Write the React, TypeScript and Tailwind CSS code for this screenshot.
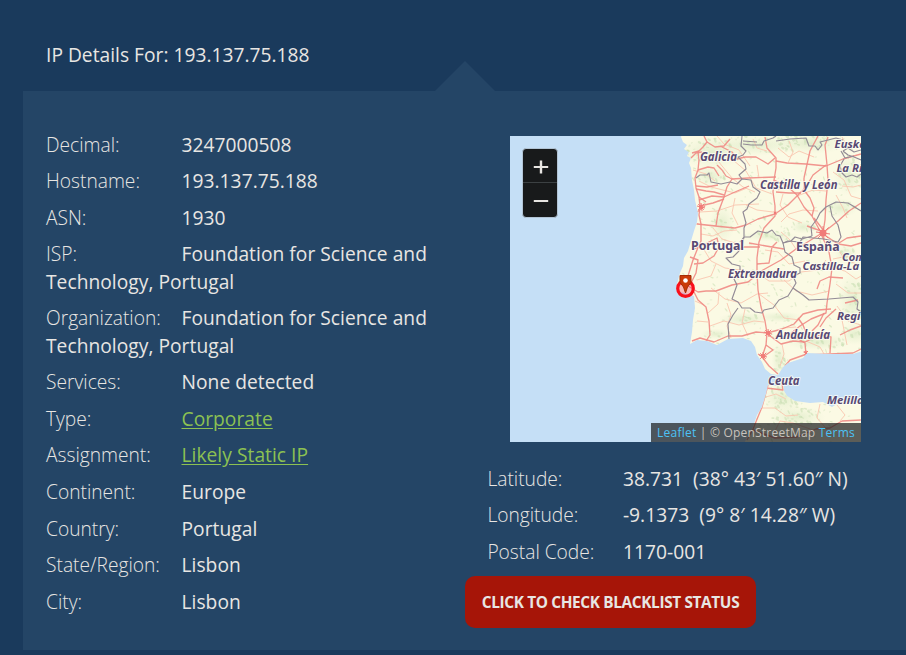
import React from "react";

type Detail = { label: string; value: string; link?: boolean };

const details: Detail[] = [
  { label: "Decimal:", value: "3247000508" },
  { label: "Hostname:", value: "193.137.75.188" },
  { label: "ASN:", value: "1930" },
  { label: "ISP:", value: "Foundation for Science and Technology, Portugal" },
  { label: "Organization:", value: "Foundation for Science and Technology, Portugal" },
  { label: "Services:", value: "None detected" },
  { label: "Type:", value: "Corporate", link: true },
  { label: "Assignment:", value: "Likely Static IP", link: true },
  { label: "Continent:", value: "Europe" },
  { label: "Country:", value: "Portugal" },
  { label: "State/Region:", value: "Lisbon" },
  { label: "City:", value: "Lisbon" },
];

const location: Detail[] = [
  { label: "Latitude:", value: "38.731\u00a0 (38° 43′ 51.60″ N)" },
  { label: "Longitude:", value: "-9.1373\u00a0 (9° 8′ 14.28″ W)" },
  { label: "Postal Code:", value: "1170-001" },
];

function Row({ label, value, link }: Detail) {
  return (
    <li className="mb-[9.3px]">
      <span className="inline-block w-[135.5px] font-light">{label}</span>
      {link ? (
        <a className="tracking-[0.04px] text-[#8cc152] underline underline-offset-2">{value}</a>
      ) : (
        <span className="font-medium tracking-[0.04px]">{value}</span>
      )}
    </li>
  );
}

const iberia =
  "M684 130L681 137 683 142 687 145 684 149 689 152 687 156 691 158 689 163 691 168 692 180 694 190 695 200 698 213 697 222 694 231 691 241 688 251 684 258 683 266 680 273 677 284 678 291 687 294 694 296 695 308 693 320 692 332 690 344 697 340 707 341 717 345 728 339 743 338 751 341 755 347 757 355 762 362 765 369 771 374 778 375 783 367 788 363 803 358 807 353 830 354 853 354 866 350 866 130Z";
const africa =
  "M768 385L776 386 783 382 784 391 787 396 795 401 810 403 823 402 832 407 840 402 866 403 866 446 743 446 747 437 753 427 757 415 762 407 766 394Z";

const roads = [
  "M704 136L707 142 703 147 698 152 699 160 698 170 695 178 696 188 699 197 700 206 699 215 701 224 701 241 697 250 693 260 688 276 686 288",
  "M707 142L715 147 724 146 730 139M720 146L732 152 737 159 745 157 756 157 763 161 768 164 775 158",
  "M692 153L699 151M691 158L696 153 702 152M698 170L708 167 714 168 719 176M717 165L722 170 726 176 732 179 748 178 776 177",
  "M696 189L706 191 714 192 724 195M699 200L712 196 724 197 735 192 749 186M700 206L713 203 724 199",
  "M696 186L707 187 718 185M699 197L706 202M697 212L705 206",
  "M732 179L727 187 724 197 718 213 716 226 697 224 715 226 735 228 746 225 758 219 775 214 788 205 797 196 806 187 813 175 826 165",
  "M765 137L767 148 776 158 776 168 774 180 773 192 775 206 775 216 764 228 759 242 757 258 757 273 758 290 761 307 765 321 767 333 766 345 762 357 769 366 778 374",
  "M776 161L787 163 806 164 826 166 843 159 861 154M776 192L789 193 801 193",
  "M774 180L788 187 797 195 804 207 812 216 820 231",
  "M804 178L804 190 810 198 814 208 812 216M818 136L810 151 804 178",
  "M828 137L825 145 827 165 828 180 826 200 825 220 823 233",
  "M688 286L698 292 706 291 716 291 732 285 748 282 763 270 781 260 796 249 806 243 822 233",
  "M694 249L703 245 717 238 719 247 714 256 703 263 694 264M690 257L698 260 696 273 690 285",
  "M694 292L698 300 706 307 709 321 710 335 706 341M692 341L700 338 714 342 728 336 742 336 756 332 768 333",
  "M767 333L782 329 794 324 803 314 818 310 831 309",
  "M822 236L829 252 832 268 830 284 827 303 826 313 811 319 800 326 790 334 805 343 806 355",
  "M823 234L838 244 851 246 861 243M824 232L838 221 849 211 861 203M824 231L814 218M824 232L807 226",
  "M766 333L781 344 793 341 805 342 820 335 831 337 830 353",
  "M798 318L803 325 807 335M824 313L818 325 812 331M861 326L850 330 840 335",
  "M763 357L758 354M763 357L773 350 766 345M785 366L790 360 804 355 830 354 853 353 861 349",
  "M768 385L762 407 753 429 747 440M766 388L783 390 782 384M753 430L775 438 797 437 816 429 830 428 842 421 861 420",
  "M737 250L744 247 760 247M757 264L769 263 772 247 777 242M749 243L766 246 784 249",
  "M817 289L820 281 829 277 843 278M836 309L826 318 820 327M858 300L845 303M839 243L847 238 861 236",
];

const minorRoads = [
  "M717 136L724 144 739 150 750 166M704 156L718 161 732 178 743 187 755 192M699 181L711 187 735 193 747 188M700 212L717 211 735 205 759 204",
  "M733 160L746 171 756 188 772 194M738 225L732 213 735 198M753 139L757 148 767 151M778 148L789 157 799 151 814 157",
  "M778 190L790 184 797 187M781 222L789 214 803 210 818 211M833 172L844 180 851 196 861 199M836 195L843 208 847 218",
  "M701 234L713 236 724 231 737 230M703 248L711 261 725 268 748 271M697 280L711 276 716 264M719 292L718 304 708 313",
  "M711 288L725 299 741 303 757 294 768 293M757 273L769 281 789 281 801 272 818 270 826 260M765 250L778 252 789 264 805 261",
  "M759 294L774 305 784 318 800 320M784 280L796 291 812 295 829 291M830 268L845 271 856 279 861 276M836 284L848 293 861 293",
  "M838 249L845 260 860 265M710 326L724 321 739 325 754 321 764 322M727 303L731 315 727 326 731 338M745 309L742 323 748 336",
  "M775 337L783 328 796 327M782 344L784 354 780 366M806 341L820 347 824 354M837 306L848 321 861 325",
  "M766 397L776 394 786 399M762 408L775 408 786 416 798 415M773 435L780 421 793 423 813 430M820 404L817 418 831 434M837 405L845 415 840 421",
  "M693 170L706 174 715 181M713 228L722 239 735 243 739 252M746 205L757 210 773 212M757 165L759 178M789 141L793 152 788 163M842 137L847 146M842 186L853 187 861 185",
  "M783 194L780 205 788 217 802 223M797 196L813 190 826 191M695 301L704 305M697 321L708 322M781 232L790 240 796 249M833 259L848 256M842 320L847 345",
];

const borders = [
  "M696 178L700 175 707 175 709 173 711 182 721 184 730 182 737 184 742 179 751 180 753 187 760 192 757 198 749 204 747 209 743 212 746 223 744 228 744 237 740 242",
  "M744 237L750 237 758 231 767 233 772 230 776 235 780 236 783 243 791 241 795 237 802 239 812 236",
  "M744 237L742 247 738 252 733 257 726 258 732 264 740 266 740 271 734 279 737 285 732 299 738 302 742 308 750 308 755 312 762 313 764 310 773 308 779 300 788 296 793 288",
  "M738 308L733 315 728 324 729 339M793 288L803 295 809 300 829 299 853 297 858 302 857 309 861 312",
  "M742 136L741 146 746 151 743 155 738 157 745 164 746 169 739 175 742 179M743 144L751 145 762 145 764 141 773 138 776 136",
  "M743 141L757 142M776 141L790 139 806 138 809 146 815 146 818 150 822 145 820 142 836 138 843 140",
  "M843 151L848 148 854 152 861 150M843 151L848 155 854 157 861 160M844 159L840 166 842 173 846 177 852 175 857 177 861 174M841 151L845 158 854 156",
  "M812 236L811 227 817 219 820 213 826 207 836 202 848 203 853 206 861 211",
  "M783 243L788 241 800 242 803 237 824 239 838 242 841 237 838 225 832 216 830 206",
  "M783 243L785 252 792 257 794 265 800 268 800 273 793 276 796 283 793 288",
];

const urbanRays = [
  [823, 233, 7],
  [701, 207, 4],
  [768, 333, 4],
  [763, 356, 4],
  [775, 213, 1.5],
  [806, 353, 2.5],
] as const;

const greenAreas = [
  [712, 152, 26, 12], [755, 145, 35, 8], [710, 176, 14, 8], [810, 143, 30, 8],
  [849, 175, 12, 15], [722, 224, 10, 14], [770, 236, 22, 4], [803, 227, 10, 5],
  [840, 208, 14, 7], [853, 300, 12, 20], [846, 254, 9, 7], [744, 319, 20, 5],
  [780, 317, 18, 4], [779, 360, 6, 12], [818, 342, 26, 6], [783, 398, 16, 12],
  [716, 334, 12, 4], [797, 417, 22, 8], [855, 334, 12, 8],
] as const;

function scatter(count: number) {
  let seed = 71;
  const next = () => {
    seed = (seed * 16807) % 2147483647;
    return seed / 2147483647;
  };
  return Array.from({ length: count }, () => ({
    x: 676 + next() * 185,
    y: 136 + next() * 306,
    a: next(),
    b: next(),
  }));
}

const forests = scatter(2200).filter(({ x, y, a }) => {
  const dense = greenAreas.some(
    ([cx, cy, rx, ry]) => ((x - cx) / rx) ** 2 + ((y - cy) / ry) ** 2 < 1.3,
  );
  return dense || a < 0.2;
});

type LabelProps = {
  x: number;
  y: number;
  w?: number;
  children: string;
  italic?: boolean;
  size?: number;
};

function Label({ x, y, w, children, italic = true, size = 11.8 }: LabelProps) {
  return (
    <text
      x={x}
      y={y}
      textLength={w}
      lengthAdjust="spacingAndGlyphs"
      fontSize={size}
      fontStyle={italic ? "italic" : "normal"}
      fontWeight={700}
      fill="#594a74"
      stroke="#fffff5"
      strokeWidth={2}
      strokeOpacity={0.75}
      strokeLinejoin="round"
      paintOrder="stroke"
      className="font-['Noto_Sans',sans-serif]"
    >
      {children}
    </text>
  );
}

function MapCanvas() {
  return (
    <svg viewBox="510 136 351 306" className="block h-[306px] w-[351px]">
      <defs>
        <clipPath id="land">
          <path d={iberia} />
          <path d={africa} />
        </clipPath>
        <radialGradient id="woodland">
          <stop offset="0" stopColor="#d9e9c3" stopOpacity="0.7" />
          <stop offset="1" stopColor="#e6f0d2" stopOpacity="0" />
        </radialGradient>
      </defs>
      <rect x="510" y="136" width="351" height="306" fill="#c5dff6" />
      <path d={iberia} fill="#fbfae4" />
      <path d={africa} fill="#fbfae4" />
      <g clipPath="url(#land)">
        {greenAreas.map(([x, y, rx, ry]) => (
          <ellipse key={`${x}-${y}`} cx={x} cy={y} rx={rx * 1.3} ry={ry * 1.4} fill="url(#woodland)" />
        ))}
        {forests.map(({ x, y, a, b }, i) => (
          <ellipse
            key={i}
            cx={x}
            cy={y}
            rx={0.7 + b * 1.7}
            ry={0.6 + a * 0.8}
            transform={`rotate(${b * 150 - 75} ${x} ${y})`}
            fill={b > 0.5 ? "#c9dfb2" : "#d8e8c4"}
            opacity={0.55}
          />
        ))}
        <g fill="none" stroke="#f9c6b0" strokeWidth="0.9">
          {minorRoads.map((d) => <path key={d} d={d} />)}
        </g>
        <g fill="none" stroke="#f08a84" strokeWidth="1.35" strokeLinejoin="round" strokeOpacity="0.9">
          {roads.map((d) => <path key={d} d={d} />)}
        </g>
        <g stroke="#f07c78" strokeWidth="1">
          {urbanRays.map(([x, y, r]) => (
            <g key={`${x}-${y}`}>
              <circle cx={x} cy={y} r={r * 0.5} fill="#f07c78" stroke="none" />
              <path d={`M${x - r} ${y - 1}L${x + r} ${y + 1}M${x - r * 0.7} ${y + r * 0.7}L${x + r * 0.8} ${y - r * 0.8}M${x} ${y - r}L${x + 1} ${y + r}M${x - r * 0.7} ${y - r * 0.7}L${x + r * 0.7} ${y + r * 0.7}`} />
            </g>
          ))}
        </g>
        <g fill="none" stroke="#938b96" strokeWidth="1.15" strokeLinejoin="round">
          {borders.map((d) => <path key={d} d={d} />)}
        </g>
      </g>
      <Label x={700} y={160.5} w={37}>Galicia</Label>
      <Label x={834.5} y={148} size={11.3}>Euskadi</Label>
      <Label x={836.5} y={172} size={11.3}>La Rioja</Label>
      <Label x={760} y={189.3} w={77.5}>Castilla y León</Label>
      <Label x={691} y={250} w={53} italic={false} size={12}>Portugal</Label>
      <Label x={796} y={251} w={43.5} italic={false} size={12}>España</Label>
      <Label x={842} y={261} size={11.1}>Comunitat</Label>
      <Label x={802.5} y={270} size={11.3}>Castilla-La Mancha</Label>
      <Label x={728} y={278.3} w={69}>Extremadura</Label>
      <Label x={837} y={319.5} size={11.3}>Región</Label>
      <Label x={776} y={339} w={54}>Andalucía</Label>
      <Label x={768} y={385.3} w={31.5}>Ceuta</Label>
      <Label x={827} y={404.3} size={11.4}>Melilla</Label>
      <circle cx="685.5" cy="288.5" r="7.8" fill="#f03" fillOpacity="0.25" stroke="#fa101a" strokeWidth="3.2" />
      <path d="M680 275.5H691V282.5L687.5 287 685.5 293 683.5 287 680 282.5Z" fill="#cb3a08" stroke="#a52c05" strokeWidth="1" />
      <circle cx="685.5" cy="280.5" r="2.3" fill="#fff" />
    </svg>
  );
}

function MapPanel() {
  return (
    <div className="relative h-[306px] w-[351px] overflow-hidden">
      <MapCanvas />
      <div className="absolute left-3 top-3 flex h-[70px] w-[36px] flex-col overflow-hidden rounded-[4px] border border-[#b3c5d5] bg-[#181a1b]">
        <button className="flex h-[34px] items-center justify-center border-b border-[#3c4143] pl-[2px] pt-[3px]" aria-label="Zoom in">
          <svg viewBox="0 0 16 16" className="h-4 w-4" stroke="#e8e6e3">
            <path d="M.8 8H15.2" strokeWidth="2" />
            <path d="M8 1.5V14.5" strokeWidth="2.4" />
          </svg>
        </button>
        <button className="flex h-[34px] items-center justify-center pl-[2px] pt-[2px]" aria-label="Zoom out">
          <svg viewBox="0 0 16 16" className="h-4 w-4" stroke="#e8e6e3" strokeWidth="2">
            <path d="M.8 8H15.2" />
          </svg>
        </button>
      </div>
      <div className="absolute bottom-0 right-0 flex h-[19px] w-[210px] items-center justify-center whitespace-pre bg-[#181a1b]/70 pt-px text-[12px] tracking-[0.22px] text-[#c8c3bc]">
        <a className="text-[#4cc2f5]">Leaflet</a> | © OpenStreetMap <a className="text-[#4cc2f5]">Terms</a>
      </div>
    </div>
  );
}

export default function App() {
  return (
    <main className="h-[655px] w-[906px] overflow-hidden bg-[#1a3a5c] font-['Open_Sans','Noto_Sans',sans-serif] text-[19.2px] leading-[27.3px] text-[#e8e6e3]">
      <header className="flex h-[91px] flex-col pl-[46px] pt-[41.2px]">
        <h1 className="tracking-[0.016px]">IP Details For: 193.137.75.188</h1>
      </header>
      <section className="relative ml-[23px] flex h-[559px] bg-[#244566] pl-[23px] pt-[39.63px]">
        <svg viewBox="0 0 60 30" className="absolute -top-[30px] left-[412px] h-[30px] w-[60px]">
          <path d="M0 30L30 0 60 30Z" fill="#244566" />
        </svg>
        <ul className="w-[396px]">
          {details.map((item) => <Row key={item.label} {...item} />)}
        </ul>
        <div className="ml-[23px] pt-[5.37px]">
          <div className="pl-[45px]">
            <MapPanel />
          </div>
          <ul className="h-[134px] pl-[22.4px] pt-[22.77px]">
            {location.map((item) => <Row key={item.label} {...item} />)}
          </ul>
          <button className="block h-[52px] w-[291px] whitespace-nowrap rounded-[10px] bg-[#a61508] pt-[2px] text-[15.36px] font-bold tracking-[-0.35px]">
            CLICK TO CHECK BLACKLIST STATUS
          </button>
        </div>
      </section>
      <footer className="h-[5px]" />
    </main>
  );
}
